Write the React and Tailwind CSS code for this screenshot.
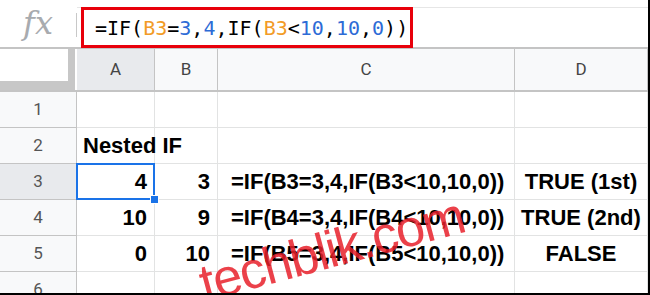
const cols = ['A', 'B', 'C', 'D'];

const rows = [
    { n: 1, cells: ['', '', '', ''] },
    { n: 2, cells: ['Nested IF', '', '', ''] },
    { n: 3, cells: ['4', '3', '=IF(B3=3,4,IF(B3<10,10,0))', 'TRUE (1st)'] },
    { n: 4, cells: ['10', '9', '=IF(B4=3,4,IF(B4<10,10,0))', 'TRUE (2nd)'] },
    { n: 5, cells: ['0', '10', '=IF(B5=3,4,IF(B5<10,10,0))', 'FALSE'] },
    { n: 6, cells: ['', '', '', ''] },
];

const align = (ci, row) => {
    if (row === 2) return 'justify-start pl-[6px]';
    if (ci === 0 || ci === 1) return 'justify-end pr-[7px]';
    if (ci === 2) return 'justify-start pl-[13px]';
    return 'justify-center';
};

const Orange = ({ children }) => <span className="text-[#f29b26]">{children}</span>;
const Blue = ({ children }) => <span className="text-[#2d6bd6]">{children}</span>;

const App = () => {
    return (
        <div
            className="w-[650px] h-[295px] bg-white overflow-hidden border-r-2 border-b-2 border-black relative"
            style={{ fontFamily: '"Liberation Sans", Arial, sans-serif' }}
        >
            {/* formula bar */}
            <div className="h-[49px] flex border-b-2 border-[#c4c4c4]">
                <div className="w-[76px] flex items-center justify-center">
                    <span
                        className="italic text-[32px] leading-none text-[#a8abaf] -mt-[2px]"
                        style={{ fontFamily: '"DejaVu Serif", "Liberation Serif", serif' }}
                    >
                        fx
                    </span>
                </div>
                <div className="w-px h-[24px] bg-[#c8c8c8] mt-[13px]"></div>
                <div className="flex-1 border-t border-[#e6e6e6] mt-[7px] relative">
                    <div
                        className="absolute left-[4px] -top-[1px] w-[332px] h-[41px] border-[3px] border-[#e8000b] flex items-center pl-[11px] text-[20px] text-black"
                        style={{ fontFamily: '"DejaVu Sans Mono", "Liberation Mono", monospace' }}
                    >
                        =IF(<Orange>B3</Orange>=<Blue>3</Blue>,<Blue>4</Blue>,IF(<Orange>B3</Orange>&lt;<Blue>10</Blue>,<Blue>10</Blue>,<Blue>0</Blue>))
                    </div>
                </div>
            </div>

            {/* grid */}
            <div className="grid grid-cols-[77px_78px_63px_297px_133px]">
                <div className="h-[43px] bg-white border-b-2 border-[#c4c4c4] flex">
                    <div className="w-[75px] h-[41px] bg-white border-r-[7px] border-b-[9px] border-[#c7c7c7]"></div>
                </div>
                {cols.map((c, i) => (
                    <div
                        key={c}
                        className={`h-[43px] border-b-2 border-r border-[#c4c4c4] flex items-center justify-center text-[17px] text-[#444] ${i === 0 ? 'bg-[#e8eaed]' : 'bg-[#f8f9fa]'}`}
                        style={{ fontFamily: 'Roboto, sans-serif' }}
                    >
                        {c}
                    </div>
                ))}

                {rows.map((r) => (
                    <div key={r.n} className="contents">
                        <div
                            className={`h-[36px] border-r border-b border-[#c4c4c4] flex items-center justify-center text-[17px] text-[#555] ${r.n === 3 ? 'bg-[#e8eaed]' : 'bg-[#f8f9fa]'}`}
                            style={{ fontFamily: 'Roboto, sans-serif' }}
                        >
                            {r.n}
                        </div>
                        {r.cells.map((v, ci) => (
                            <div
                                key={ci}
                                className={`h-[36px] border-r border-b border-[#e2e3e3] flex items-center text-[22px] font-bold text-black whitespace-nowrap relative ${align(ci, r.n)}`}
                            >
                                {v}
                                {r.n === 3 && ci === 0 && (
                                    <>
                                        <div className="absolute z-10 -left-px -top-px right-[-1px] bottom-[-1px] border-2 border-[#1a73e8]"></div>
                                        <div className="absolute z-10 right-[-5px] bottom-[-5px] w-[9px] h-[9px] bg-[#1a73e8] border border-white"></div>
                                    </>
                                )}
                            </div>
                        ))}
                    </div>
                ))}
            </div>

            {/* watermark */}
            <div
                className="absolute z-20 left-[196px] top-[223px] text-[52px] leading-none tracking-[-1.5px] text-[#e8202a]/85 -rotate-[15deg] origin-center pointer-events-none whitespace-nowrap"
                style={{ fontFamily: '"Liberation Sans", Arial, sans-serif' }}
            >
                techblik.com
            </div>
        </div>
    );
};

export default App;
